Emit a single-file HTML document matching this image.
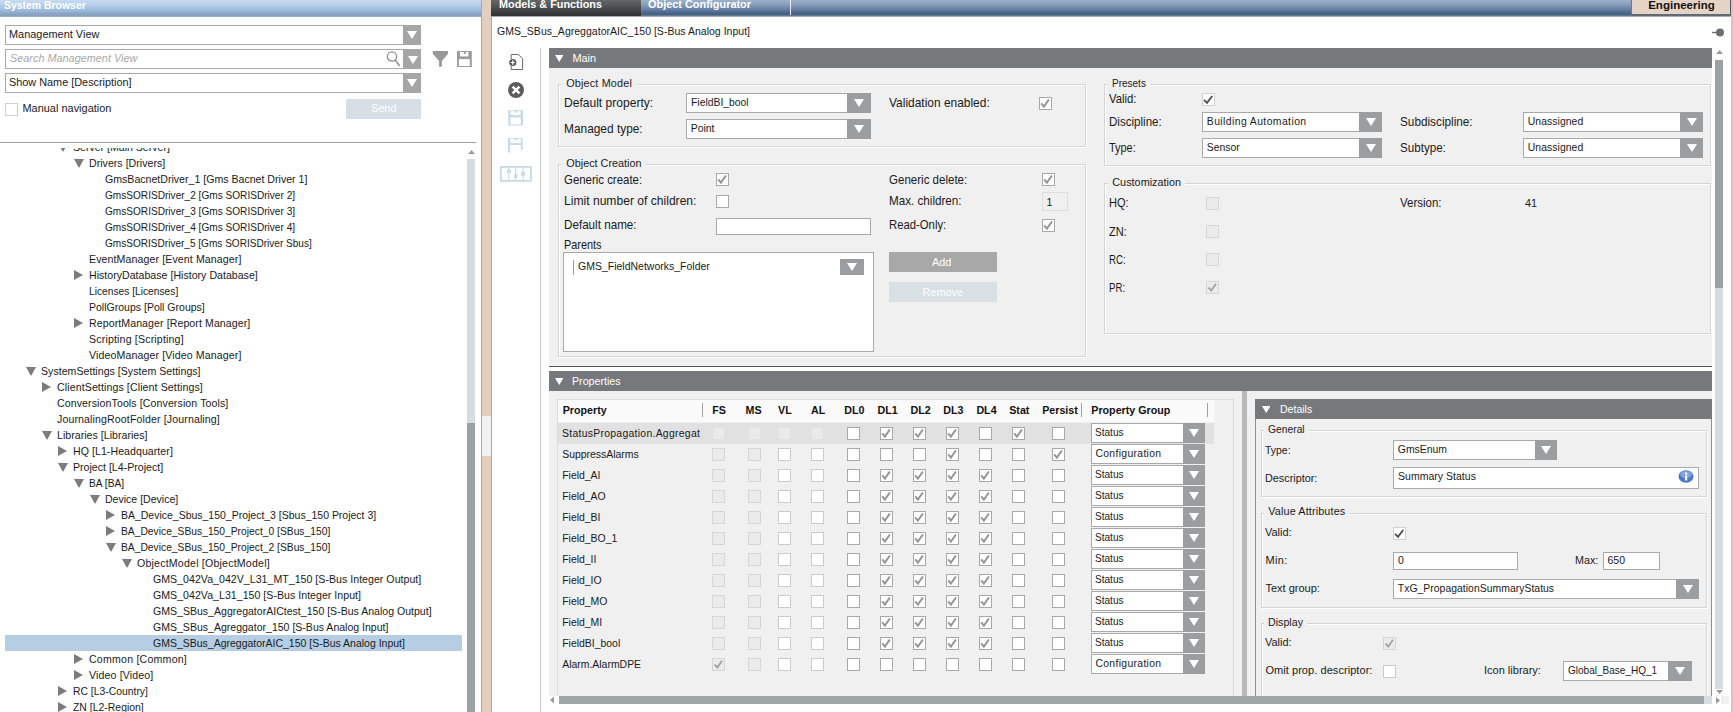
<!DOCTYPE html><html><head><meta charset="utf-8"><style>
html,body{margin:0;padding:0;}
body{width:1733px;height:712px;position:relative;overflow:hidden;background:#fff;font-family:"Liberation Sans", sans-serif;}
div,svg{position:absolute;}
.t{white-space:nowrap;}
</style></head><body>
<div style="left:0px;top:0px;width:482px;height:17px;background:linear-gradient(#c9dbf1 0px,#b2cde9 6px,#9ebcde 10px,#88a5c6 14px,#8a9db3 16px,#b8c0c8 17px);"></div>
<div class="t" style="left:4.2px;top:-1.80px;font-size:10.8px;line-height:14px;color:#fff;transform:scaleX(0.9661);transform-origin:0 0;font-weight:bold;">System Browser</div>
<div style="left:5px;top:25px;width:416px;height:20px;background:#fff;border:1px solid #a9a9a9;box-sizing:border-box;"></div>
<div style="left:403px;top:25px;width:18px;height:20px;background:#a6a6a6;"></div>
<svg style="left:407.0px;top:31.0px" width="10" height="8" viewBox="0 0 10 8"><path d="M0 0H10L5.0 8Z" fill="#fff"/></svg>
<div class="t" style="left:9px;top:26.00px;font-size:10.9px;line-height:16px;color:#1a1a1a;letter-spacing:0.025px;">Management View</div>
<div style="left:5px;top:49px;width:416px;height:20px;background:#fff;border:1px solid #a9a9a9;box-sizing:border-box;"></div>
<div style="left:403px;top:49px;width:18px;height:20px;background:#a6a6a6;"></div>
<svg style="left:407.5px;top:55.5px" width="10" height="8" viewBox="0 0 10 8"><path d="M0 0H10L5.0 8Z" fill="#fff"/></svg>
<div class="t" style="left:10px;top:50.00px;font-size:10.9px;line-height:16px;color:#a8a8a8;transform:scaleX(0.9981);transform-origin:0 0;font-style:italic;">Search Management View</div>
<svg style="left:385px;top:50px" width="18" height="18"><circle cx="7" cy="6.5" r="4.6" fill="none" stroke="#8e8e8e" stroke-width="1.3"/><path d="M10.2 10L14.6 16" stroke="#8e8e8e" stroke-width="1.5"/></svg>
<div style="left:5px;top:73px;width:416px;height:20px;background:#fff;border:1px solid #a9a9a9;box-sizing:border-box;"></div>
<div style="left:403px;top:73px;width:18px;height:20px;background:#a6a6a6;"></div>
<svg style="left:407.0px;top:79.0px" width="10" height="8" viewBox="0 0 10 8"><path d="M0 0H10L5.0 8Z" fill="#fff"/></svg>
<div class="t" style="left:9px;top:74.00px;font-size:10.9px;line-height:16px;color:#1a1a1a;transform:scaleX(0.9980);transform-origin:0 0;">Show Name [Description]</div>
<svg style="left:432px;top:51px" width="17" height="17"><path d="M0.8 0H16V2.7L9.9 10V15.7H7.1V10L0.8 2.7Z" fill="#999"/></svg>
<svg style="left:457px;top:51px" width="16" height="17"><rect x="0" y="0" width="14.8" height="16" fill="#9c9c9c"/><rect x="3" y="1" width="8.4" height="4.4" fill="#fff"/><rect x="7" y="1" width="1.9" height="1.9" fill="#9c9c9c"/><rect x="1.9" y="8.1" width="10.9" height="6.9" fill="#fff"/></svg>
<div style="left:5px;top:103px;width:13px;height:13px;background:#fff;border:1px solid #d0d0d0;box-sizing:border-box;"></div>
<div class="t" style="left:22.5px;top:99.50px;font-size:10.9px;line-height:16px;color:#1a1a1a;letter-spacing:0.031px;">Manual navigation</div>
<div style="left:346px;top:99px;width:75px;height:20px;background:#d6dfe3;"></div>
<div class="t" style="left:371px;top:100.00px;font-size:10.9px;line-height:16px;color:#fff;">Send</div>
<div style="left:0px;top:142px;width:476px;height:1px;background:#a0a0a0;"></div>
<div style="left:0;top:148px;width:466px;height:564px;overflow:hidden;">
<svg style="left:57.5px;top:-5.2px" width="10" height="9" viewBox="0 0 10 9"><path d="M0 0H10L5.0 9Z" fill="#7b7b7b"/></svg>
<div class="t" style="left:73px;top:-9.00px;font-size:10.6px;line-height:16px;color:#1a1a1a;transform:scaleX(0.9969);transform-origin:0 0;">Server [Main Server]</div>
<svg style="left:73.5px;top:10.8px" width="10" height="9" viewBox="0 0 10 9"><path d="M0 0H10L5.0 9Z" fill="#7b7b7b"/></svg>
<div class="t" style="left:89px;top:7.00px;font-size:10.6px;line-height:16px;color:#1a1a1a;letter-spacing:0.019px;">Drivers [Drivers]</div>
<div class="t" style="left:105px;top:23.00px;font-size:10.6px;line-height:16px;color:#1a1a1a;transform:scaleX(0.9992);transform-origin:0 0;">GmsBacnetDriver_1 [Gms Bacnet Driver 1]</div>
<div class="t" style="left:105px;top:39.00px;font-size:10.6px;line-height:16px;color:#1a1a1a;transform:scaleX(0.9524);transform-origin:0 0;">GmsSORISDriver_2 [Gms SORISDriver 2]</div>
<div class="t" style="left:105px;top:55.00px;font-size:10.6px;line-height:16px;color:#1a1a1a;transform:scaleX(0.9524);transform-origin:0 0;">GmsSORISDriver_3 [Gms SORISDriver 3]</div>
<div class="t" style="left:105px;top:71.00px;font-size:10.6px;line-height:16px;color:#1a1a1a;transform:scaleX(0.9524);transform-origin:0 0;">GmsSORISDriver_4 [Gms SORISDriver 4]</div>
<div class="t" style="left:105px;top:87.00px;font-size:10.6px;line-height:16px;color:#1a1a1a;transform:scaleX(0.9494);transform-origin:0 0;">GmsSORISDriver_5 [Gms SORISDriver Sbus]</div>
<div class="t" style="left:89px;top:103.00px;font-size:10.6px;line-height:16px;color:#1a1a1a;letter-spacing:0.105px;">EventManager [Event Manager]</div>
<svg style="left:74px;top:122px" width="9" height="10" viewBox="0 0 9 10"><path d="M0 0L9 5.0L0 10Z" fill="#7b7b7b"/></svg>
<div class="t" style="left:89px;top:119.00px;font-size:10.6px;line-height:16px;color:#1a1a1a;letter-spacing:0.011px;">HistoryDatabase [History Database]</div>
<div class="t" style="left:89px;top:135.00px;font-size:10.6px;line-height:16px;color:#1a1a1a;transform:scaleX(0.9650);transform-origin:0 0;">Licenses [Licenses]</div>
<div class="t" style="left:89px;top:151.00px;font-size:10.6px;line-height:16px;color:#1a1a1a;transform:scaleX(0.9931);transform-origin:0 0;">PollGroups [Poll Groups]</div>
<svg style="left:74px;top:170px" width="9" height="10" viewBox="0 0 9 10"><path d="M0 0L9 5.0L0 10Z" fill="#7b7b7b"/></svg>
<div class="t" style="left:89px;top:167.00px;font-size:10.6px;line-height:16px;color:#1a1a1a;letter-spacing:0.079px;">ReportManager [Report Manager]</div>
<div class="t" style="left:89px;top:183.00px;font-size:10.6px;line-height:16px;color:#1a1a1a;letter-spacing:0.167px;">Scripting [Scripting]</div>
<div class="t" style="left:89px;top:199.00px;font-size:10.6px;line-height:16px;color:#1a1a1a;letter-spacing:0.120px;">VideoManager [Video Manager]</div>
<svg style="left:25.5px;top:218.8px" width="10" height="9" viewBox="0 0 10 9"><path d="M0 0H10L5.0 9Z" fill="#7b7b7b"/></svg>
<div class="t" style="left:41px;top:215.00px;font-size:10.6px;line-height:16px;color:#1a1a1a;letter-spacing:0.019px;">SystemSettings [System Settings]</div>
<svg style="left:42px;top:234px" width="9" height="10" viewBox="0 0 9 10"><path d="M0 0L9 5.0L0 10Z" fill="#7b7b7b"/></svg>
<div class="t" style="left:57px;top:231.00px;font-size:10.6px;line-height:16px;color:#1a1a1a;letter-spacing:0.104px;">ClientSettings [Client Settings]</div>
<div class="t" style="left:57px;top:247.00px;font-size:10.6px;line-height:16px;color:#1a1a1a;letter-spacing:0.093px;">ConversionTools [Conversion Tools]</div>
<div class="t" style="left:57px;top:263.00px;font-size:10.6px;line-height:16px;color:#1a1a1a;letter-spacing:0.119px;">JournalingRootFolder [Journaling]</div>
<svg style="left:41.5px;top:282.8px" width="10" height="9" viewBox="0 0 10 9"><path d="M0 0H10L5.0 9Z" fill="#7b7b7b"/></svg>
<div class="t" style="left:57px;top:279.00px;font-size:10.6px;line-height:16px;color:#1a1a1a;letter-spacing:0.020px;">Libraries [Libraries]</div>
<svg style="left:58px;top:298px" width="9" height="10" viewBox="0 0 9 10"><path d="M0 0L9 5.0L0 10Z" fill="#7b7b7b"/></svg>
<div class="t" style="left:73px;top:295.00px;font-size:10.6px;line-height:16px;color:#1a1a1a;letter-spacing:0.050px;">HQ [L1-Headquarter]</div>
<svg style="left:57.5px;top:314.8px" width="10" height="9" viewBox="0 0 10 9"><path d="M0 0H10L5.0 9Z" fill="#7b7b7b"/></svg>
<div class="t" style="left:73px;top:311.00px;font-size:10.6px;line-height:16px;color:#1a1a1a;letter-spacing:0.000px;">Project [L4-Project]</div>
<svg style="left:73.5px;top:330.8px" width="10" height="9" viewBox="0 0 10 9"><path d="M0 0H10L5.0 9Z" fill="#7b7b7b"/></svg>
<div class="t" style="left:89px;top:327.00px;font-size:10.6px;line-height:16px;color:#1a1a1a;transform:scaleX(0.9598);transform-origin:0 0;">BA [BA]</div>
<svg style="left:89.5px;top:346.8px" width="10" height="9" viewBox="0 0 10 9"><path d="M0 0H10L5.0 9Z" fill="#7b7b7b"/></svg>
<div class="t" style="left:105px;top:343.00px;font-size:10.6px;line-height:16px;color:#1a1a1a;transform:scaleX(0.9950);transform-origin:0 0;">Device [Device]</div>
<svg style="left:106px;top:362px" width="9" height="10" viewBox="0 0 9 10"><path d="M0 0L9 5.0L0 10Z" fill="#7b7b7b"/></svg>
<div class="t" style="left:121px;top:359.00px;font-size:10.6px;line-height:16px;color:#1a1a1a;transform:scaleX(0.9891);transform-origin:0 0;">BA_Device_Sbus_150_Project_3 [Sbus_150 Project 3]</div>
<svg style="left:106px;top:378px" width="9" height="10" viewBox="0 0 9 10"><path d="M0 0L9 5.0L0 10Z" fill="#7b7b7b"/></svg>
<div class="t" style="left:121px;top:375.00px;font-size:10.6px;line-height:16px;color:#1a1a1a;transform:scaleX(0.9707);transform-origin:0 0;">BA_Device_SBus_150_Project_0 [SBus_150]</div>
<svg style="left:105.5px;top:394.8px" width="10" height="9" viewBox="0 0 10 9"><path d="M0 0H10L5.0 9Z" fill="#7b7b7b"/></svg>
<div class="t" style="left:121px;top:391.00px;font-size:10.6px;line-height:16px;color:#1a1a1a;transform:scaleX(0.9707);transform-origin:0 0;">BA_Device_SBus_150_Project_2 [SBus_150]</div>
<svg style="left:121.5px;top:410.8px" width="10" height="9" viewBox="0 0 10 9"><path d="M0 0H10L5.0 9Z" fill="#7b7b7b"/></svg>
<div class="t" style="left:137px;top:407.00px;font-size:10.6px;line-height:16px;color:#1a1a1a;letter-spacing:0.203px;">ObjectModel [ObjectModel]</div>
<div class="t" style="left:153px;top:423.00px;font-size:10.6px;line-height:16px;color:#1a1a1a;letter-spacing:0.023px;">GMS_042Va_042V_L31_MT_150 [S-Bus Integer Output]</div>
<div class="t" style="left:153px;top:439.00px;font-size:10.6px;line-height:16px;color:#1a1a1a;letter-spacing:0.023px;">GMS_042Va_L31_150 [S-Bus Integer Input]</div>
<div class="t" style="left:153px;top:455.00px;font-size:10.6px;line-height:16px;color:#1a1a1a;transform:scaleX(0.9959);transform-origin:0 0;">GMS_SBus_AggregatorAICtest_150 [S-Bus Analog Output]</div>
<div class="t" style="left:153px;top:471.00px;font-size:10.6px;line-height:16px;color:#1a1a1a;transform:scaleX(0.9945);transform-origin:0 0;">GMS_SBus_Agreggator_150 [S-Bus Analog Input]</div>
<div style="left:5px;top:487px;width:457px;height:16px;background:#b5cee3;"></div>
<div class="t" style="left:153px;top:487.00px;font-size:10.6px;line-height:16px;color:#1a1a1a;transform:scaleX(0.9902);transform-origin:0 0;">GMS_SBus_AgreggatorAIC_150 [S-Bus Analog Input]</div>
<svg style="left:74px;top:506px" width="9" height="10" viewBox="0 0 9 10"><path d="M0 0L9 5.0L0 10Z" fill="#7b7b7b"/></svg>
<div class="t" style="left:89px;top:503.00px;font-size:10.6px;line-height:16px;color:#1a1a1a;letter-spacing:0.216px;">Common [Common]</div>
<svg style="left:74px;top:522px" width="9" height="10" viewBox="0 0 9 10"><path d="M0 0L9 5.0L0 10Z" fill="#7b7b7b"/></svg>
<div class="t" style="left:89px;top:519.00px;font-size:10.6px;line-height:16px;color:#1a1a1a;letter-spacing:0.138px;">Video [Video]</div>
<svg style="left:58px;top:538px" width="9" height="10" viewBox="0 0 9 10"><path d="M0 0L9 5.0L0 10Z" fill="#7b7b7b"/></svg>
<div class="t" style="left:73px;top:535.00px;font-size:10.6px;line-height:16px;color:#1a1a1a;transform:scaleX(0.9787);transform-origin:0 0;">RC [L3-Country]</div>
<svg style="left:58px;top:554px" width="9" height="10" viewBox="0 0 9 10"><path d="M0 0L9 5.0L0 10Z" fill="#7b7b7b"/></svg>
<div class="t" style="left:73px;top:551.00px;font-size:10.6px;line-height:16px;color:#1a1a1a;transform:scaleX(0.9851);transform-origin:0 0;">ZN [L2-Region]</div>
</div>
<svg style="left:467.5px;top:149.5px" width="7" height="4" viewBox="0 0 7 4"><path d="M0 4H7L3.5 0Z" fill="#9a9a9a"/></svg>
<div style="left:467px;top:159px;width:8px;height:553px;background:#d5dde0;"></div>
<div style="left:467px;top:423px;width:8px;height:289px;background:#9ca1a4;"></div>
<div style="left:481px;top:0px;width:11px;height:712px;background:#e3cfc0;border-left:1px solid #a9a9a9;border-right:1px solid #a9a9a9;box-sizing:border-box;"></div>
<div style="left:482px;top:416px;width:9px;height:40px;background:#f2f2f2;"></div>
<div style="left:492px;top:0px;width:1241px;height:17px;background:linear-gradient(#9db1c9 0px,#8ba2bd 4px,#6883a6 9px,#47658b 13px,#455f82 15px,#8793a0 16px,#c0c6cc 17px);"></div>
<div style="left:491px;top:0px;width:150px;height:16px;background:linear-gradient(#646868,#4a4e4e 50%,#353939 85%,#303434);"></div>
<div class="t" style="left:498.5px;top:-3.40px;font-size:11.3px;line-height:14px;color:#fff;transform:scaleX(0.9595);transform-origin:0 0;font-weight:bold;">Models &amp; Functions</div>
<div class="t" style="left:648px;top:-3.40px;font-size:11.3px;line-height:14px;color:#fff;transform:scaleX(0.9656);transform-origin:0 0;font-weight:bold;">Object Configurator</div>
<div style="left:790px;top:0px;width:1px;height:15px;background:#e8eef4;"></div>
<div style="left:1631px;top:0px;width:101px;height:16px;background:#e5d4c6;border-left:1px solid #6f7a85;border-bottom:2px solid #5f6a75;border-right:2px solid #505a66;box-sizing:border-box;"></div>
<div style="left:1731px;top:0px;width:2px;height:712px;background:#cdc6c2;"></div>
<div class="t" style="left:1648.2px;top:-2.40px;font-size:11.5px;line-height:14px;color:#111;letter-spacing:0.013px;font-weight:bold;">Engineering</div>
<div class="t" style="left:497px;top:23.00px;font-size:10.5px;line-height:16px;color:#1a1a1a;letter-spacing:0.019px;">GMS_SBus_AgreggatorAIC_150 [S-Bus Analog Input]</div>
<svg style="left:1711px;top:27px" width="14" height="11"><path d="M1 5.5H6" stroke="#6d6d6d" stroke-width="1.4"/><circle cx="9" cy="5.5" r="4" fill="#6d6d6d"/></svg>
<div style="left:540px;top:48px;width:1px;height:664px;background:#cfcfcf;"></div>
<svg style="left:505px;top:50px" width="22" height="22"><path d="M6.2 9V4.5H13.4L17.6 8.7V19.5H6.2V16" fill="none" stroke="#6a6a6a" stroke-width="1"/><circle cx="7.8" cy="12.5" r="3.6" fill="#5a5a5a"/><path d="M5.6 12.5H10M7.8 10.3V14.7" stroke="#fff" stroke-width="1.2"/></svg>
<svg style="left:507px;top:81px" width="18" height="18"><circle cx="9" cy="9" r="8" fill="#5e5e5e"/><path d="M5.6 5.6L12.4 12.4M12.4 5.6L5.6 12.4" stroke="#fff" stroke-width="2.3"/></svg>
<svg style="left:508px;top:110px" width="16" height="16"><rect x="0.2" y="0.2" width="14.8" height="15.3" fill="#c6dce2"/><rect x="2.6" y="1.1" width="9.9" height="4" fill="#fff"/><rect x="7" y="1" width="2.5" height="1.7" fill="#c6dce2"/><rect x="2.6" y="7.4" width="10.2" height="7" fill="#fff"/></svg>
<svg style="left:508px;top:138px" width="17" height="16"><rect x="0" y="0" width="14.6" height="14.6" fill="#c6dce2"/><rect x="2.2" y="0.8" width="10.6" height="4.3" fill="#fff"/><rect x="6.5" y="0.7" width="2.6" height="1.7" fill="#c6dce2"/><rect x="2.2" y="7" width="10.6" height="8" fill="#fff"/><rect x="12.8" y="11.7" width="2" height="3" fill="#fff"/><rect x="4" y="13.5" width="4" height="1.2" fill="#fff"/><rect x="12.5" y="13.5" width="2" height="1.2" fill="#fff"/></svg>
<svg style="left:500px;top:166px" width="32" height="16"><rect x="0.9" y="0.9" width="30" height="14" fill="none" stroke="#c6dce2" stroke-width="1.8"/><path d="M8.8 2V14M15.6 2V14M23.2 2V14" stroke="#c6dce2" stroke-width="1.1"/><rect x="7" y="3.8" width="4" height="3" fill="#c6dce2"/><rect x="14" y="8" width="3.5" height="3.8" fill="#c6dce2"/><rect x="21" y="6" width="4" height="3.6" fill="#c6dce2"/></svg>
<div style="left:549px;top:48px;width:1163px;height:19.5px;background:#76797c;"></div>
<svg style="left:554.5px;top:54.5px" width="8.5" height="7" viewBox="0 0 8.5 7"><path d="M0 0H8.5L4.25 7Z" fill="#fff"/></svg>
<div class="t" style="left:572.4px;top:49.60px;font-size:10.9px;line-height:16px;color:#fff;letter-spacing:0.016px;">Main</div>
<div style="left:549px;top:67.5px;width:1163px;height:298.5px;background:#f0f0f0;"></div>
<div style="left:549px;top:366px;width:1163px;height:1px;background:#58595b;"></div>
<div style="left:558px;top:84px;width:528px;height:63px;border:1px solid #d5d5d5;box-shadow:inset 1px 1px 0 #fff, 1px 1px 0 #fff;box-sizing:border-box;"></div>
<div style="left:562.3px;top:82px;width:73.5px;height:4px;background:#f0f0f0;"></div>
<div class="t" style="left:566.3px;top:74.70px;font-size:10.8px;line-height:16px;color:#1a1a1a;letter-spacing:0.172px;">Object Model</div>
<div style="left:558px;top:164px;width:528px;height:193px;border:1px solid #d5d5d5;box-shadow:inset 1px 1px 0 #fff, 1px 1px 0 #fff;box-sizing:border-box;"></div>
<div style="left:562.3px;top:162px;width:83.2px;height:4px;background:#f0f0f0;"></div>
<div class="t" style="left:566.3px;top:155.20px;font-size:10.8px;line-height:16px;color:#1a1a1a;letter-spacing:0.010px;">Object Creation</div>
<div style="left:1104px;top:84px;width:607px;height:81.5px;border:1px solid #d5d5d5;box-shadow:inset 1px 1px 0 #fff, 1px 1px 0 #fff;box-sizing:border-box;"></div>
<div style="left:1108.3px;top:82px;width:41.9px;height:4px;background:#f0f0f0;"></div>
<div class="t" style="left:1112.3px;top:74.70px;font-size:10.8px;line-height:16px;color:#1a1a1a;transform:scaleX(0.9259);transform-origin:0 0;">Presets</div>
<div style="left:1104px;top:183px;width:607px;height:150.5px;border:1px solid #d5d5d5;box-shadow:inset 1px 1px 0 #fff, 1px 1px 0 #fff;box-sizing:border-box;"></div>
<div style="left:1108.3px;top:181px;width:76.8px;height:4px;background:#f0f0f0;"></div>
<div class="t" style="left:1112.3px;top:173.70px;font-size:10.8px;line-height:16px;color:#1a1a1a;letter-spacing:0.027px;">Customization</div>
<div class="t" style="left:563.5px;top:94.60px;font-size:12.2px;line-height:16px;color:#1a1a1a;transform:scaleX(0.9894);transform-origin:0 0;">Default property:</div>
<div style="left:686px;top:93px;width:185px;height:20px;background:#fff;border:1px solid #a9a9a9;box-sizing:border-box;"></div>
<div style="left:847px;top:93px;width:24px;height:20px;background:#9b9ea0;"></div>
<svg style="left:854.0px;top:99.0px" width="10" height="8" viewBox="0 0 10 8"><path d="M0 0H10L5.0 8Z" fill="#fff"/></svg>
<div class="t" style="left:690.8px;top:95.00px;font-size:10.4px;line-height:16px;color:#1a1a1a;transform:scaleX(0.9979);transform-origin:0 0;">FieldBI_bool</div>
<div class="t" style="left:563.5px;top:120.60px;font-size:12.2px;line-height:16px;color:#1a1a1a;transform:scaleX(0.9757);transform-origin:0 0;">Managed type:</div>
<div style="left:686px;top:119px;width:185px;height:20px;background:#fff;border:1px solid #a9a9a9;box-sizing:border-box;"></div>
<div style="left:847px;top:119px;width:24px;height:20px;background:#9b9ea0;"></div>
<svg style="left:854.0px;top:125.0px" width="10" height="8" viewBox="0 0 10 8"><path d="M0 0H10L5.0 8Z" fill="#fff"/></svg>
<div class="t" style="left:690.8px;top:121.00px;font-size:10.4px;line-height:16px;color:#1a1a1a;">Point</div>
<div class="t" style="left:889px;top:94.60px;font-size:12.2px;line-height:16px;color:#1a1a1a;transform:scaleX(0.9801);transform-origin:0 0;">Validation enabled:</div>
<div style="left:1039px;top:97px;width:13px;height:13px;background:#fff;border:1px solid #a8a8a8;box-sizing:border-box;"></div>
<svg style="left:1039px;top:97px" width="13" height="13"><path d="M2.2 6.3L4.9 9.6L9.9 2.5" fill="none" stroke="#959595" stroke-width="2"/></svg>
<div class="t" style="left:563.5px;top:172.00px;font-size:12.2px;line-height:16px;color:#1a1a1a;transform:scaleX(0.9371);transform-origin:0 0;">Generic create:</div>
<div style="left:716px;top:173px;width:13px;height:13px;background:#fff;border:1px solid #a8a8a8;box-sizing:border-box;"></div>
<svg style="left:716px;top:173px" width="13" height="13"><path d="M2.2 6.3L4.9 9.6L9.9 2.5" fill="none" stroke="#959595" stroke-width="2"/></svg>
<div class="t" style="left:563.5px;top:193.00px;font-size:12.2px;line-height:16px;color:#1a1a1a;transform:scaleX(0.9926);transform-origin:0 0;">Limit number of children:</div>
<div style="left:716px;top:195px;width:13px;height:13px;background:#fff;border:1px solid #a8a8a8;box-sizing:border-box;"></div>
<div class="t" style="left:563.5px;top:217.00px;font-size:12.2px;line-height:16px;color:#1a1a1a;transform:scaleX(0.9565);transform-origin:0 0;">Default name:</div>
<div style="left:716px;top:217.5px;width:155px;height:17px;background:#fff;border:1px solid #a9a9a9;box-sizing:border-box;"></div>
<div class="t" style="left:563.5px;top:236.50px;font-size:12.2px;line-height:16px;color:#1a1a1a;transform:scaleX(0.8933);transform-origin:0 0;">Parents</div>
<div style="left:563px;top:252px;width:311px;height:100px;background:#fff;border:1px solid #a9a9a9;box-sizing:border-box;"></div>
<div style="left:572.5px;top:260px;width:1px;height:15px;background:#9a9a9a;"></div>
<div class="t" style="left:578px;top:258.00px;font-size:10.5px;line-height:16px;color:#1a1a1a;transform:scaleX(0.9994);transform-origin:0 0;">GMS_FieldNetworks_Folder</div>
<div style="left:840px;top:259px;width:23.5px;height:15.5px;background:#9b9ea0;"></div>
<svg style="left:847px;top:263px" width="10" height="8" viewBox="0 0 10 8"><path d="M0 0H10L5.0 8Z" fill="#fff"/></svg>
<div class="t" style="left:889px;top:172.00px;font-size:12.2px;line-height:16px;color:#1a1a1a;transform:scaleX(0.9466);transform-origin:0 0;">Generic delete:</div>
<div style="left:1042px;top:173px;width:13px;height:13px;background:#fff;border:1px solid #a8a8a8;box-sizing:border-box;"></div>
<svg style="left:1042px;top:173px" width="13" height="13"><path d="M2.2 6.3L4.9 9.6L9.9 2.5" fill="none" stroke="#959595" stroke-width="2"/></svg>
<div class="t" style="left:889px;top:193.00px;font-size:12.2px;line-height:16px;color:#1a1a1a;transform:scaleX(0.9567);transform-origin:0 0;">Max. children:</div>
<div style="left:1042px;top:192px;width:26px;height:19px;background:#f0f0f0;border:1px solid #dedede;box-sizing:border-box;"></div>
<div class="t" style="left:1046.5px;top:193.50px;font-size:10.5px;line-height:16px;color:#1a1a1a;">1</div>
<div class="t" style="left:889px;top:217.00px;font-size:12.2px;line-height:16px;color:#1a1a1a;transform:scaleX(0.9282);transform-origin:0 0;">Read-Only:</div>
<div style="left:1042px;top:219px;width:13px;height:13px;background:#fff;border:1px solid #a8a8a8;box-sizing:border-box;"></div>
<svg style="left:1042px;top:219px" width="13" height="13"><path d="M2.2 6.3L4.9 9.6L9.9 2.5" fill="none" stroke="#959595" stroke-width="2"/></svg>
<div style="left:889px;top:252px;width:108px;height:20px;background:#a8a8a8;"></div>
<div class="t" style="left:932px;top:254.00px;font-size:10.9px;line-height:16px;color:#fff;">Add</div>
<div style="left:889px;top:282px;width:108px;height:20px;background:#d8e0e3;"></div>
<div class="t" style="left:922.5px;top:284.00px;font-size:10.9px;line-height:16px;color:#fff;">Remove</div>
<div class="t" style="left:1109.3px;top:91.00px;font-size:12.2px;line-height:16px;color:#1a1a1a;transform:scaleX(0.9276);transform-origin:0 0;">Valid:</div>
<div style="left:1202px;top:93px;width:13px;height:13px;background:#fff;border:1px solid #d2d2d2;box-sizing:border-box;"></div>
<svg style="left:1202px;top:93px" width="13" height="13"><path d="M2 6.8L5 9.8L10.2 3" fill="none" stroke="#505050" stroke-width="1.9"/></svg>
<div class="t" style="left:1109.3px;top:114.00px;font-size:12.2px;line-height:16px;color:#1a1a1a;transform:scaleX(0.9491);transform-origin:0 0;">Discipline:</div>
<div style="left:1202px;top:112px;width:180px;height:20px;background:#fff;border:1px solid #a9a9a9;box-sizing:border-box;"></div>
<div style="left:1359px;top:112px;width:23px;height:20px;background:#9b9ea0;"></div>
<svg style="left:1365.5px;top:118.0px" width="10" height="8" viewBox="0 0 10 8"><path d="M0 0H10L5.0 8Z" fill="#fff"/></svg>
<div class="t" style="left:1206.8px;top:114.00px;font-size:10.4px;line-height:16px;color:#1a1a1a;letter-spacing:0.415px;">Building Automation</div>
<div class="t" style="left:1109.3px;top:140.00px;font-size:12.2px;line-height:16px;color:#1a1a1a;transform:scaleX(0.8966);transform-origin:0 0;">Type:</div>
<div style="left:1202px;top:138px;width:180px;height:20px;background:#fff;border:1px solid #a9a9a9;box-sizing:border-box;"></div>
<div style="left:1359px;top:138px;width:23px;height:20px;background:#9b9ea0;"></div>
<svg style="left:1365.5px;top:144.0px" width="10" height="8" viewBox="0 0 10 8"><path d="M0 0H10L5.0 8Z" fill="#fff"/></svg>
<div class="t" style="left:1206.8px;top:140.00px;font-size:10.4px;line-height:16px;color:#1a1a1a;">Sensor</div>
<div class="t" style="left:1400px;top:114.00px;font-size:12.2px;line-height:16px;color:#1a1a1a;transform:scaleX(0.9658);transform-origin:0 0;">Subdiscipline:</div>
<div style="left:1523px;top:112px;width:180px;height:20px;background:#fff;border:1px solid #a9a9a9;box-sizing:border-box;"></div>
<div style="left:1680px;top:112px;width:23px;height:20px;background:#9b9ea0;"></div>
<svg style="left:1686.5px;top:118.0px" width="10" height="8" viewBox="0 0 10 8"><path d="M0 0H10L5.0 8Z" fill="#fff"/></svg>
<div class="t" style="left:1527.8px;top:114.00px;font-size:10.4px;line-height:16px;color:#1a1a1a;letter-spacing:0.054px;">Unassigned</div>
<div class="t" style="left:1400px;top:140.00px;font-size:12.2px;line-height:16px;color:#1a1a1a;transform:scaleX(0.9525);transform-origin:0 0;">Subtype:</div>
<div style="left:1523px;top:138px;width:180px;height:20px;background:#fff;border:1px solid #a9a9a9;box-sizing:border-box;"></div>
<div style="left:1680px;top:138px;width:23px;height:20px;background:#9b9ea0;"></div>
<svg style="left:1686.5px;top:144.0px" width="10" height="8" viewBox="0 0 10 8"><path d="M0 0H10L5.0 8Z" fill="#fff"/></svg>
<div class="t" style="left:1527.8px;top:140.00px;font-size:10.4px;line-height:16px;color:#1a1a1a;letter-spacing:0.054px;">Unassigned</div>
<div class="t" style="left:1109.3px;top:195.00px;font-size:12.2px;line-height:16px;color:#1a1a1a;transform:scaleX(0.9072);transform-origin:0 0;">HQ:</div>
<div style="left:1206px;top:197px;width:13px;height:13px;background:#ebebeb;border:1px solid #d6d6d6;box-sizing:border-box;"></div>
<div class="t" style="left:1109.3px;top:223.80px;font-size:12.2px;line-height:16px;color:#1a1a1a;transform:scaleX(0.9113);transform-origin:0 0;">ZN:</div>
<div style="left:1206px;top:225px;width:13px;height:13px;background:#ebebeb;border:1px solid #d6d6d6;box-sizing:border-box;"></div>
<div class="t" style="left:1109.3px;top:251.80px;font-size:12.2px;line-height:16px;color:#1a1a1a;transform:scaleX(0.7911);transform-origin:0 0;">RC:</div>
<div style="left:1206px;top:253px;width:13px;height:13px;background:#ebebeb;border:1px solid #d6d6d6;box-sizing:border-box;"></div>
<div class="t" style="left:1109.3px;top:279.80px;font-size:12.2px;line-height:16px;color:#1a1a1a;transform:scaleX(0.7902);transform-origin:0 0;">PR:</div>
<div style="left:1206px;top:281px;width:13px;height:13px;background:#ebebeb;border:1px solid #d6d6d6;box-sizing:border-box;"></div>
<svg style="left:1206px;top:281px" width="13" height="13"><path d="M2.6 6.6L5.3 9.6L10 2.8" fill="none" stroke="#a2a2a2" stroke-width="1.8"/></svg>
<div class="t" style="left:1400px;top:195.00px;font-size:12.2px;line-height:16px;color:#1a1a1a;transform:scaleX(0.9423);transform-origin:0 0;">Version:</div>
<div class="t" style="left:1525px;top:194.50px;font-size:10.9px;line-height:16px;color:#1a1a1a;">41</div>
<div style="left:549px;top:371px;width:1163px;height:20px;background:#76797c;"></div>
<svg style="left:554.5px;top:378px" width="8.5" height="7" viewBox="0 0 8.5 7"><path d="M0 0H8.5L4.25 7Z" fill="#fff"/></svg>
<div class="t" style="left:572.4px;top:373.00px;font-size:10.9px;line-height:16px;color:#fff;transform:scaleX(0.9798);transform-origin:0 0;">Properties</div>
<div style="left:549px;top:391px;width:1163px;height:305px;background:#f0f0f0;"></div>
<div style="left:557px;top:399px;width:677px;height:297px;border:1px solid #dcdcdc;border-bottom:none;box-sizing:border-box;"></div>
<div style="left:558px;top:400px;width:657px;height:22px;background:#fafafa;"></div>
<div class="t" style="left:562.7px;top:402.30px;font-size:10.7px;line-height:16px;color:#111;font-weight:bold;">Property</div>
<div style="left:702px;top:403px;width:1px;height:14px;background:#a0a0a0;"></div>
<div class="t" style="left:712.3px;top:402.30px;font-size:10.7px;line-height:16px;color:#111;font-weight:bold;">FS</div>
<div class="t" style="left:745.5px;top:402.30px;font-size:10.7px;line-height:16px;color:#111;font-weight:bold;">MS</div>
<div class="t" style="left:778px;top:402.30px;font-size:10.7px;line-height:16px;color:#111;font-weight:bold;">VL</div>
<div class="t" style="left:811px;top:402.30px;font-size:10.7px;line-height:16px;color:#111;font-weight:bold;">AL</div>
<div class="t" style="left:844.3px;top:402.30px;font-size:10.7px;line-height:16px;color:#111;font-weight:bold;">DL0</div>
<div class="t" style="left:877.5px;top:402.30px;font-size:10.7px;line-height:16px;color:#111;font-weight:bold;">DL1</div>
<div class="t" style="left:910.5px;top:402.30px;font-size:10.7px;line-height:16px;color:#111;font-weight:bold;">DL2</div>
<div class="t" style="left:943.3px;top:402.30px;font-size:10.7px;line-height:16px;color:#111;font-weight:bold;">DL3</div>
<div class="t" style="left:976.4px;top:402.30px;font-size:10.7px;line-height:16px;color:#111;font-weight:bold;">DL4</div>
<div class="t" style="left:1009.2px;top:402.30px;font-size:10.7px;line-height:16px;color:#111;font-weight:bold;">Stat</div>
<div class="t" style="left:1042.2px;top:402.30px;font-size:10.7px;line-height:16px;color:#111;font-weight:bold;">Persist</div>
<div style="left:1081px;top:403px;width:1px;height:14px;background:#a0a0a0;"></div>
<div class="t" style="left:1091.3px;top:402.30px;font-size:10.7px;line-height:16px;color:#111;font-weight:bold;">Property Group</div>
<div style="left:1207px;top:403px;width:1px;height:14px;background:#a0a0a0;"></div>
<div style="left:558px;top:423px;width:656px;height:21px;background:#e1e1e1;"></div>
<div style="left:562px;top:426px;width:138px;height:16px;overflow:hidden;"><div class="t" style="left:0;top:0;font-size:10.45px;letter-spacing:0.27px;line-height:16px;color:#1a1a1a;">StatusPropagation.Aggregation</div></div>
<div style="left:713px;top:428px;width:11px;height:11px;background:#e9eaea;"></div>
<div style="left:749px;top:428px;width:11px;height:11px;background:#e9eaea;"></div>
<div style="left:779px;top:428px;width:11px;height:11px;background:#e9eaea;"></div>
<div style="left:812px;top:428px;width:11px;height:11px;background:#e9eaea;"></div>
<div style="left:847px;top:427px;width:13px;height:13px;background:#fff;border:1px solid #a8a8a8;box-sizing:border-box;"></div>
<div style="left:880px;top:427px;width:13px;height:13px;background:#fff;border:1px solid #a8a8a8;box-sizing:border-box;"></div>
<svg style="left:880px;top:427px" width="13" height="13"><path d="M2.2 6.3L4.9 9.6L9.9 2.5" fill="none" stroke="#959595" stroke-width="2"/></svg>
<div style="left:913px;top:427px;width:13px;height:13px;background:#fff;border:1px solid #a8a8a8;box-sizing:border-box;"></div>
<svg style="left:913px;top:427px" width="13" height="13"><path d="M2.2 6.3L4.9 9.6L9.9 2.5" fill="none" stroke="#959595" stroke-width="2"/></svg>
<div style="left:946px;top:427px;width:13px;height:13px;background:#fff;border:1px solid #a8a8a8;box-sizing:border-box;"></div>
<svg style="left:946px;top:427px" width="13" height="13"><path d="M2.2 6.3L4.9 9.6L9.9 2.5" fill="none" stroke="#959595" stroke-width="2"/></svg>
<div style="left:979px;top:427px;width:13px;height:13px;background:#fff;border:1px solid #a8a8a8;box-sizing:border-box;"></div>
<div style="left:1012px;top:427px;width:13px;height:13px;background:#fff;border:1px solid #a8a8a8;box-sizing:border-box;"></div>
<svg style="left:1012px;top:427px" width="13" height="13"><path d="M2.2 6.3L4.9 9.6L9.9 2.5" fill="none" stroke="#959595" stroke-width="2"/></svg>
<div style="left:1052px;top:427px;width:13px;height:13px;background:#fff;border:1px solid #a8a8a8;box-sizing:border-box;"></div>
<div style="left:1091px;top:423px;width:114px;height:20px;background:#fff;border:1px solid #a9a9a9;box-sizing:border-box;"></div>
<div style="left:1183px;top:423px;width:22px;height:20px;background:#9b9ea0;"></div>
<svg style="left:1189.0px;top:429.0px" width="10" height="8" viewBox="0 0 10 8"><path d="M0 0H10L5.0 8Z" fill="#fff"/></svg>
<div class="t" style="left:1095.4px;top:425.00px;font-size:10.4px;line-height:16px;color:#1a1a1a;transform:scaleX(0.9683);transform-origin:0 0;">Status</div>
<div class="t" style="left:562.2px;top:446.90px;font-size:10.45px;line-height:16px;color:#1a1a1a;">SuppressAlarms</div>
<div style="left:712px;top:448px;width:13px;height:13px;background:#ebebeb;border:1px solid #d6d6d6;box-sizing:border-box;"></div>
<div style="left:748px;top:448px;width:13px;height:13px;background:#ebebeb;border:1px solid #d6d6d6;box-sizing:border-box;"></div>
<div style="left:778px;top:448px;width:13px;height:13px;background:#fff;border:1px solid #cbcbcb;box-sizing:border-box;"></div>
<div style="left:811px;top:448px;width:13px;height:13px;background:#fff;border:1px solid #cbcbcb;box-sizing:border-box;"></div>
<div style="left:847px;top:448px;width:13px;height:13px;background:#fff;border:1px solid #a8a8a8;box-sizing:border-box;"></div>
<div style="left:880px;top:448px;width:13px;height:13px;background:#fff;border:1px solid #a8a8a8;box-sizing:border-box;"></div>
<div style="left:913px;top:448px;width:13px;height:13px;background:#fff;border:1px solid #a8a8a8;box-sizing:border-box;"></div>
<div style="left:946px;top:448px;width:13px;height:13px;background:#fff;border:1px solid #a8a8a8;box-sizing:border-box;"></div>
<svg style="left:946px;top:448px" width="13" height="13"><path d="M2.2 6.3L4.9 9.6L9.9 2.5" fill="none" stroke="#959595" stroke-width="2"/></svg>
<div style="left:979px;top:448px;width:13px;height:13px;background:#fff;border:1px solid #a8a8a8;box-sizing:border-box;"></div>
<div style="left:1012px;top:448px;width:13px;height:13px;background:#fff;border:1px solid #a8a8a8;box-sizing:border-box;"></div>
<div style="left:1052px;top:448px;width:13px;height:13px;background:#fff;border:1px solid #a8a8a8;box-sizing:border-box;"></div>
<svg style="left:1052px;top:448px" width="13" height="13"><path d="M2.2 6.3L4.9 9.6L9.9 2.5" fill="none" stroke="#959595" stroke-width="2"/></svg>
<div style="left:1091px;top:444px;width:114px;height:20px;background:#fff;border:1px solid #a9a9a9;box-sizing:border-box;"></div>
<div style="left:1183px;top:444px;width:22px;height:20px;background:#9b9ea0;"></div>
<svg style="left:1189.0px;top:450.0px" width="10" height="8" viewBox="0 0 10 8"><path d="M0 0H10L5.0 8Z" fill="#fff"/></svg>
<div class="t" style="left:1095.4px;top:446.00px;font-size:10.4px;line-height:16px;color:#1a1a1a;letter-spacing:0.327px;">Configuration</div>
<div class="t" style="left:562.2px;top:467.90px;font-size:10.45px;line-height:16px;color:#1a1a1a;">Field_AI</div>
<div style="left:712px;top:469px;width:13px;height:13px;background:#ebebeb;border:1px solid #d6d6d6;box-sizing:border-box;"></div>
<div style="left:748px;top:469px;width:13px;height:13px;background:#ebebeb;border:1px solid #d6d6d6;box-sizing:border-box;"></div>
<div style="left:778px;top:469px;width:13px;height:13px;background:#fff;border:1px solid #cbcbcb;box-sizing:border-box;"></div>
<div style="left:811px;top:469px;width:13px;height:13px;background:#fff;border:1px solid #cbcbcb;box-sizing:border-box;"></div>
<div style="left:847px;top:469px;width:13px;height:13px;background:#fff;border:1px solid #a8a8a8;box-sizing:border-box;"></div>
<div style="left:880px;top:469px;width:13px;height:13px;background:#fff;border:1px solid #a8a8a8;box-sizing:border-box;"></div>
<svg style="left:880px;top:469px" width="13" height="13"><path d="M2.2 6.3L4.9 9.6L9.9 2.5" fill="none" stroke="#959595" stroke-width="2"/></svg>
<div style="left:913px;top:469px;width:13px;height:13px;background:#fff;border:1px solid #a8a8a8;box-sizing:border-box;"></div>
<svg style="left:913px;top:469px" width="13" height="13"><path d="M2.2 6.3L4.9 9.6L9.9 2.5" fill="none" stroke="#959595" stroke-width="2"/></svg>
<div style="left:946px;top:469px;width:13px;height:13px;background:#fff;border:1px solid #a8a8a8;box-sizing:border-box;"></div>
<svg style="left:946px;top:469px" width="13" height="13"><path d="M2.2 6.3L4.9 9.6L9.9 2.5" fill="none" stroke="#959595" stroke-width="2"/></svg>
<div style="left:979px;top:469px;width:13px;height:13px;background:#fff;border:1px solid #a8a8a8;box-sizing:border-box;"></div>
<svg style="left:979px;top:469px" width="13" height="13"><path d="M2.2 6.3L4.9 9.6L9.9 2.5" fill="none" stroke="#959595" stroke-width="2"/></svg>
<div style="left:1012px;top:469px;width:13px;height:13px;background:#fff;border:1px solid #a8a8a8;box-sizing:border-box;"></div>
<div style="left:1052px;top:469px;width:13px;height:13px;background:#fff;border:1px solid #a8a8a8;box-sizing:border-box;"></div>
<div style="left:1091px;top:465px;width:114px;height:20px;background:#fff;border:1px solid #a9a9a9;box-sizing:border-box;"></div>
<div style="left:1183px;top:465px;width:22px;height:20px;background:#9b9ea0;"></div>
<svg style="left:1189.0px;top:471.0px" width="10" height="8" viewBox="0 0 10 8"><path d="M0 0H10L5.0 8Z" fill="#fff"/></svg>
<div class="t" style="left:1095.4px;top:467.00px;font-size:10.4px;line-height:16px;color:#1a1a1a;transform:scaleX(0.9683);transform-origin:0 0;">Status</div>
<div class="t" style="left:562.2px;top:488.90px;font-size:10.45px;line-height:16px;color:#1a1a1a;">Field_AO</div>
<div style="left:712px;top:490px;width:13px;height:13px;background:#ebebeb;border:1px solid #d6d6d6;box-sizing:border-box;"></div>
<div style="left:748px;top:490px;width:13px;height:13px;background:#ebebeb;border:1px solid #d6d6d6;box-sizing:border-box;"></div>
<div style="left:778px;top:490px;width:13px;height:13px;background:#fff;border:1px solid #cbcbcb;box-sizing:border-box;"></div>
<div style="left:811px;top:490px;width:13px;height:13px;background:#fff;border:1px solid #cbcbcb;box-sizing:border-box;"></div>
<div style="left:847px;top:490px;width:13px;height:13px;background:#fff;border:1px solid #a8a8a8;box-sizing:border-box;"></div>
<div style="left:880px;top:490px;width:13px;height:13px;background:#fff;border:1px solid #a8a8a8;box-sizing:border-box;"></div>
<svg style="left:880px;top:490px" width="13" height="13"><path d="M2.2 6.3L4.9 9.6L9.9 2.5" fill="none" stroke="#959595" stroke-width="2"/></svg>
<div style="left:913px;top:490px;width:13px;height:13px;background:#fff;border:1px solid #a8a8a8;box-sizing:border-box;"></div>
<svg style="left:913px;top:490px" width="13" height="13"><path d="M2.2 6.3L4.9 9.6L9.9 2.5" fill="none" stroke="#959595" stroke-width="2"/></svg>
<div style="left:946px;top:490px;width:13px;height:13px;background:#fff;border:1px solid #a8a8a8;box-sizing:border-box;"></div>
<svg style="left:946px;top:490px" width="13" height="13"><path d="M2.2 6.3L4.9 9.6L9.9 2.5" fill="none" stroke="#959595" stroke-width="2"/></svg>
<div style="left:979px;top:490px;width:13px;height:13px;background:#fff;border:1px solid #a8a8a8;box-sizing:border-box;"></div>
<svg style="left:979px;top:490px" width="13" height="13"><path d="M2.2 6.3L4.9 9.6L9.9 2.5" fill="none" stroke="#959595" stroke-width="2"/></svg>
<div style="left:1012px;top:490px;width:13px;height:13px;background:#fff;border:1px solid #a8a8a8;box-sizing:border-box;"></div>
<div style="left:1052px;top:490px;width:13px;height:13px;background:#fff;border:1px solid #a8a8a8;box-sizing:border-box;"></div>
<div style="left:1091px;top:486px;width:114px;height:20px;background:#fff;border:1px solid #a9a9a9;box-sizing:border-box;"></div>
<div style="left:1183px;top:486px;width:22px;height:20px;background:#9b9ea0;"></div>
<svg style="left:1189.0px;top:492.0px" width="10" height="8" viewBox="0 0 10 8"><path d="M0 0H10L5.0 8Z" fill="#fff"/></svg>
<div class="t" style="left:1095.4px;top:488.00px;font-size:10.4px;line-height:16px;color:#1a1a1a;transform:scaleX(0.9683);transform-origin:0 0;">Status</div>
<div class="t" style="left:562.2px;top:509.90px;font-size:10.45px;line-height:16px;color:#1a1a1a;">Field_BI</div>
<div style="left:712px;top:511px;width:13px;height:13px;background:#ebebeb;border:1px solid #d6d6d6;box-sizing:border-box;"></div>
<div style="left:748px;top:511px;width:13px;height:13px;background:#ebebeb;border:1px solid #d6d6d6;box-sizing:border-box;"></div>
<div style="left:778px;top:511px;width:13px;height:13px;background:#fff;border:1px solid #cbcbcb;box-sizing:border-box;"></div>
<div style="left:811px;top:511px;width:13px;height:13px;background:#fff;border:1px solid #cbcbcb;box-sizing:border-box;"></div>
<div style="left:847px;top:511px;width:13px;height:13px;background:#fff;border:1px solid #a8a8a8;box-sizing:border-box;"></div>
<div style="left:880px;top:511px;width:13px;height:13px;background:#fff;border:1px solid #a8a8a8;box-sizing:border-box;"></div>
<svg style="left:880px;top:511px" width="13" height="13"><path d="M2.2 6.3L4.9 9.6L9.9 2.5" fill="none" stroke="#959595" stroke-width="2"/></svg>
<div style="left:913px;top:511px;width:13px;height:13px;background:#fff;border:1px solid #a8a8a8;box-sizing:border-box;"></div>
<svg style="left:913px;top:511px" width="13" height="13"><path d="M2.2 6.3L4.9 9.6L9.9 2.5" fill="none" stroke="#959595" stroke-width="2"/></svg>
<div style="left:946px;top:511px;width:13px;height:13px;background:#fff;border:1px solid #a8a8a8;box-sizing:border-box;"></div>
<svg style="left:946px;top:511px" width="13" height="13"><path d="M2.2 6.3L4.9 9.6L9.9 2.5" fill="none" stroke="#959595" stroke-width="2"/></svg>
<div style="left:979px;top:511px;width:13px;height:13px;background:#fff;border:1px solid #a8a8a8;box-sizing:border-box;"></div>
<svg style="left:979px;top:511px" width="13" height="13"><path d="M2.2 6.3L4.9 9.6L9.9 2.5" fill="none" stroke="#959595" stroke-width="2"/></svg>
<div style="left:1012px;top:511px;width:13px;height:13px;background:#fff;border:1px solid #a8a8a8;box-sizing:border-box;"></div>
<div style="left:1052px;top:511px;width:13px;height:13px;background:#fff;border:1px solid #a8a8a8;box-sizing:border-box;"></div>
<div style="left:1091px;top:507px;width:114px;height:20px;background:#fff;border:1px solid #a9a9a9;box-sizing:border-box;"></div>
<div style="left:1183px;top:507px;width:22px;height:20px;background:#9b9ea0;"></div>
<svg style="left:1189.0px;top:513.0px" width="10" height="8" viewBox="0 0 10 8"><path d="M0 0H10L5.0 8Z" fill="#fff"/></svg>
<div class="t" style="left:1095.4px;top:509.00px;font-size:10.4px;line-height:16px;color:#1a1a1a;transform:scaleX(0.9683);transform-origin:0 0;">Status</div>
<div class="t" style="left:562.2px;top:530.90px;font-size:10.45px;line-height:16px;color:#1a1a1a;">Field_BO_1</div>
<div style="left:712px;top:532px;width:13px;height:13px;background:#ebebeb;border:1px solid #d6d6d6;box-sizing:border-box;"></div>
<div style="left:748px;top:532px;width:13px;height:13px;background:#ebebeb;border:1px solid #d6d6d6;box-sizing:border-box;"></div>
<div style="left:778px;top:532px;width:13px;height:13px;background:#fff;border:1px solid #cbcbcb;box-sizing:border-box;"></div>
<div style="left:811px;top:532px;width:13px;height:13px;background:#fff;border:1px solid #cbcbcb;box-sizing:border-box;"></div>
<div style="left:847px;top:532px;width:13px;height:13px;background:#fff;border:1px solid #a8a8a8;box-sizing:border-box;"></div>
<div style="left:880px;top:532px;width:13px;height:13px;background:#fff;border:1px solid #a8a8a8;box-sizing:border-box;"></div>
<svg style="left:880px;top:532px" width="13" height="13"><path d="M2.2 6.3L4.9 9.6L9.9 2.5" fill="none" stroke="#959595" stroke-width="2"/></svg>
<div style="left:913px;top:532px;width:13px;height:13px;background:#fff;border:1px solid #a8a8a8;box-sizing:border-box;"></div>
<svg style="left:913px;top:532px" width="13" height="13"><path d="M2.2 6.3L4.9 9.6L9.9 2.5" fill="none" stroke="#959595" stroke-width="2"/></svg>
<div style="left:946px;top:532px;width:13px;height:13px;background:#fff;border:1px solid #a8a8a8;box-sizing:border-box;"></div>
<svg style="left:946px;top:532px" width="13" height="13"><path d="M2.2 6.3L4.9 9.6L9.9 2.5" fill="none" stroke="#959595" stroke-width="2"/></svg>
<div style="left:979px;top:532px;width:13px;height:13px;background:#fff;border:1px solid #a8a8a8;box-sizing:border-box;"></div>
<svg style="left:979px;top:532px" width="13" height="13"><path d="M2.2 6.3L4.9 9.6L9.9 2.5" fill="none" stroke="#959595" stroke-width="2"/></svg>
<div style="left:1012px;top:532px;width:13px;height:13px;background:#fff;border:1px solid #a8a8a8;box-sizing:border-box;"></div>
<div style="left:1052px;top:532px;width:13px;height:13px;background:#fff;border:1px solid #a8a8a8;box-sizing:border-box;"></div>
<div style="left:1091px;top:528px;width:114px;height:20px;background:#fff;border:1px solid #a9a9a9;box-sizing:border-box;"></div>
<div style="left:1183px;top:528px;width:22px;height:20px;background:#9b9ea0;"></div>
<svg style="left:1189.0px;top:534.0px" width="10" height="8" viewBox="0 0 10 8"><path d="M0 0H10L5.0 8Z" fill="#fff"/></svg>
<div class="t" style="left:1095.4px;top:530.00px;font-size:10.4px;line-height:16px;color:#1a1a1a;transform:scaleX(0.9683);transform-origin:0 0;">Status</div>
<div class="t" style="left:562.2px;top:551.90px;font-size:10.45px;line-height:16px;color:#1a1a1a;">Field_II</div>
<div style="left:712px;top:553px;width:13px;height:13px;background:#ebebeb;border:1px solid #d6d6d6;box-sizing:border-box;"></div>
<div style="left:748px;top:553px;width:13px;height:13px;background:#ebebeb;border:1px solid #d6d6d6;box-sizing:border-box;"></div>
<div style="left:778px;top:553px;width:13px;height:13px;background:#fff;border:1px solid #cbcbcb;box-sizing:border-box;"></div>
<div style="left:811px;top:553px;width:13px;height:13px;background:#fff;border:1px solid #cbcbcb;box-sizing:border-box;"></div>
<div style="left:847px;top:553px;width:13px;height:13px;background:#fff;border:1px solid #a8a8a8;box-sizing:border-box;"></div>
<div style="left:880px;top:553px;width:13px;height:13px;background:#fff;border:1px solid #a8a8a8;box-sizing:border-box;"></div>
<svg style="left:880px;top:553px" width="13" height="13"><path d="M2.2 6.3L4.9 9.6L9.9 2.5" fill="none" stroke="#959595" stroke-width="2"/></svg>
<div style="left:913px;top:553px;width:13px;height:13px;background:#fff;border:1px solid #a8a8a8;box-sizing:border-box;"></div>
<svg style="left:913px;top:553px" width="13" height="13"><path d="M2.2 6.3L4.9 9.6L9.9 2.5" fill="none" stroke="#959595" stroke-width="2"/></svg>
<div style="left:946px;top:553px;width:13px;height:13px;background:#fff;border:1px solid #a8a8a8;box-sizing:border-box;"></div>
<svg style="left:946px;top:553px" width="13" height="13"><path d="M2.2 6.3L4.9 9.6L9.9 2.5" fill="none" stroke="#959595" stroke-width="2"/></svg>
<div style="left:979px;top:553px;width:13px;height:13px;background:#fff;border:1px solid #a8a8a8;box-sizing:border-box;"></div>
<svg style="left:979px;top:553px" width="13" height="13"><path d="M2.2 6.3L4.9 9.6L9.9 2.5" fill="none" stroke="#959595" stroke-width="2"/></svg>
<div style="left:1012px;top:553px;width:13px;height:13px;background:#fff;border:1px solid #a8a8a8;box-sizing:border-box;"></div>
<div style="left:1052px;top:553px;width:13px;height:13px;background:#fff;border:1px solid #a8a8a8;box-sizing:border-box;"></div>
<div style="left:1091px;top:549px;width:114px;height:20px;background:#fff;border:1px solid #a9a9a9;box-sizing:border-box;"></div>
<div style="left:1183px;top:549px;width:22px;height:20px;background:#9b9ea0;"></div>
<svg style="left:1189.0px;top:555.0px" width="10" height="8" viewBox="0 0 10 8"><path d="M0 0H10L5.0 8Z" fill="#fff"/></svg>
<div class="t" style="left:1095.4px;top:551.00px;font-size:10.4px;line-height:16px;color:#1a1a1a;transform:scaleX(0.9683);transform-origin:0 0;">Status</div>
<div class="t" style="left:562.2px;top:572.90px;font-size:10.45px;line-height:16px;color:#1a1a1a;">Field_IO</div>
<div style="left:712px;top:574px;width:13px;height:13px;background:#ebebeb;border:1px solid #d6d6d6;box-sizing:border-box;"></div>
<div style="left:748px;top:574px;width:13px;height:13px;background:#ebebeb;border:1px solid #d6d6d6;box-sizing:border-box;"></div>
<div style="left:778px;top:574px;width:13px;height:13px;background:#fff;border:1px solid #cbcbcb;box-sizing:border-box;"></div>
<div style="left:811px;top:574px;width:13px;height:13px;background:#fff;border:1px solid #cbcbcb;box-sizing:border-box;"></div>
<div style="left:847px;top:574px;width:13px;height:13px;background:#fff;border:1px solid #a8a8a8;box-sizing:border-box;"></div>
<div style="left:880px;top:574px;width:13px;height:13px;background:#fff;border:1px solid #a8a8a8;box-sizing:border-box;"></div>
<svg style="left:880px;top:574px" width="13" height="13"><path d="M2.2 6.3L4.9 9.6L9.9 2.5" fill="none" stroke="#959595" stroke-width="2"/></svg>
<div style="left:913px;top:574px;width:13px;height:13px;background:#fff;border:1px solid #a8a8a8;box-sizing:border-box;"></div>
<svg style="left:913px;top:574px" width="13" height="13"><path d="M2.2 6.3L4.9 9.6L9.9 2.5" fill="none" stroke="#959595" stroke-width="2"/></svg>
<div style="left:946px;top:574px;width:13px;height:13px;background:#fff;border:1px solid #a8a8a8;box-sizing:border-box;"></div>
<svg style="left:946px;top:574px" width="13" height="13"><path d="M2.2 6.3L4.9 9.6L9.9 2.5" fill="none" stroke="#959595" stroke-width="2"/></svg>
<div style="left:979px;top:574px;width:13px;height:13px;background:#fff;border:1px solid #a8a8a8;box-sizing:border-box;"></div>
<svg style="left:979px;top:574px" width="13" height="13"><path d="M2.2 6.3L4.9 9.6L9.9 2.5" fill="none" stroke="#959595" stroke-width="2"/></svg>
<div style="left:1012px;top:574px;width:13px;height:13px;background:#fff;border:1px solid #a8a8a8;box-sizing:border-box;"></div>
<div style="left:1052px;top:574px;width:13px;height:13px;background:#fff;border:1px solid #a8a8a8;box-sizing:border-box;"></div>
<div style="left:1091px;top:570px;width:114px;height:20px;background:#fff;border:1px solid #a9a9a9;box-sizing:border-box;"></div>
<div style="left:1183px;top:570px;width:22px;height:20px;background:#9b9ea0;"></div>
<svg style="left:1189.0px;top:576.0px" width="10" height="8" viewBox="0 0 10 8"><path d="M0 0H10L5.0 8Z" fill="#fff"/></svg>
<div class="t" style="left:1095.4px;top:572.00px;font-size:10.4px;line-height:16px;color:#1a1a1a;transform:scaleX(0.9683);transform-origin:0 0;">Status</div>
<div class="t" style="left:562.2px;top:593.90px;font-size:10.45px;line-height:16px;color:#1a1a1a;">Field_MO</div>
<div style="left:712px;top:595px;width:13px;height:13px;background:#ebebeb;border:1px solid #d6d6d6;box-sizing:border-box;"></div>
<div style="left:748px;top:595px;width:13px;height:13px;background:#ebebeb;border:1px solid #d6d6d6;box-sizing:border-box;"></div>
<div style="left:778px;top:595px;width:13px;height:13px;background:#fff;border:1px solid #cbcbcb;box-sizing:border-box;"></div>
<div style="left:811px;top:595px;width:13px;height:13px;background:#fff;border:1px solid #cbcbcb;box-sizing:border-box;"></div>
<div style="left:847px;top:595px;width:13px;height:13px;background:#fff;border:1px solid #a8a8a8;box-sizing:border-box;"></div>
<div style="left:880px;top:595px;width:13px;height:13px;background:#fff;border:1px solid #a8a8a8;box-sizing:border-box;"></div>
<svg style="left:880px;top:595px" width="13" height="13"><path d="M2.2 6.3L4.9 9.6L9.9 2.5" fill="none" stroke="#959595" stroke-width="2"/></svg>
<div style="left:913px;top:595px;width:13px;height:13px;background:#fff;border:1px solid #a8a8a8;box-sizing:border-box;"></div>
<svg style="left:913px;top:595px" width="13" height="13"><path d="M2.2 6.3L4.9 9.6L9.9 2.5" fill="none" stroke="#959595" stroke-width="2"/></svg>
<div style="left:946px;top:595px;width:13px;height:13px;background:#fff;border:1px solid #a8a8a8;box-sizing:border-box;"></div>
<svg style="left:946px;top:595px" width="13" height="13"><path d="M2.2 6.3L4.9 9.6L9.9 2.5" fill="none" stroke="#959595" stroke-width="2"/></svg>
<div style="left:979px;top:595px;width:13px;height:13px;background:#fff;border:1px solid #a8a8a8;box-sizing:border-box;"></div>
<svg style="left:979px;top:595px" width="13" height="13"><path d="M2.2 6.3L4.9 9.6L9.9 2.5" fill="none" stroke="#959595" stroke-width="2"/></svg>
<div style="left:1012px;top:595px;width:13px;height:13px;background:#fff;border:1px solid #a8a8a8;box-sizing:border-box;"></div>
<div style="left:1052px;top:595px;width:13px;height:13px;background:#fff;border:1px solid #a8a8a8;box-sizing:border-box;"></div>
<div style="left:1091px;top:591px;width:114px;height:20px;background:#fff;border:1px solid #a9a9a9;box-sizing:border-box;"></div>
<div style="left:1183px;top:591px;width:22px;height:20px;background:#9b9ea0;"></div>
<svg style="left:1189.0px;top:597.0px" width="10" height="8" viewBox="0 0 10 8"><path d="M0 0H10L5.0 8Z" fill="#fff"/></svg>
<div class="t" style="left:1095.4px;top:593.00px;font-size:10.4px;line-height:16px;color:#1a1a1a;transform:scaleX(0.9683);transform-origin:0 0;">Status</div>
<div class="t" style="left:562.2px;top:614.90px;font-size:10.45px;line-height:16px;color:#1a1a1a;">Field_MI</div>
<div style="left:712px;top:616px;width:13px;height:13px;background:#ebebeb;border:1px solid #d6d6d6;box-sizing:border-box;"></div>
<div style="left:748px;top:616px;width:13px;height:13px;background:#ebebeb;border:1px solid #d6d6d6;box-sizing:border-box;"></div>
<div style="left:778px;top:616px;width:13px;height:13px;background:#fff;border:1px solid #cbcbcb;box-sizing:border-box;"></div>
<div style="left:811px;top:616px;width:13px;height:13px;background:#fff;border:1px solid #cbcbcb;box-sizing:border-box;"></div>
<div style="left:847px;top:616px;width:13px;height:13px;background:#fff;border:1px solid #a8a8a8;box-sizing:border-box;"></div>
<div style="left:880px;top:616px;width:13px;height:13px;background:#fff;border:1px solid #a8a8a8;box-sizing:border-box;"></div>
<svg style="left:880px;top:616px" width="13" height="13"><path d="M2.2 6.3L4.9 9.6L9.9 2.5" fill="none" stroke="#959595" stroke-width="2"/></svg>
<div style="left:913px;top:616px;width:13px;height:13px;background:#fff;border:1px solid #a8a8a8;box-sizing:border-box;"></div>
<svg style="left:913px;top:616px" width="13" height="13"><path d="M2.2 6.3L4.9 9.6L9.9 2.5" fill="none" stroke="#959595" stroke-width="2"/></svg>
<div style="left:946px;top:616px;width:13px;height:13px;background:#fff;border:1px solid #a8a8a8;box-sizing:border-box;"></div>
<svg style="left:946px;top:616px" width="13" height="13"><path d="M2.2 6.3L4.9 9.6L9.9 2.5" fill="none" stroke="#959595" stroke-width="2"/></svg>
<div style="left:979px;top:616px;width:13px;height:13px;background:#fff;border:1px solid #a8a8a8;box-sizing:border-box;"></div>
<svg style="left:979px;top:616px" width="13" height="13"><path d="M2.2 6.3L4.9 9.6L9.9 2.5" fill="none" stroke="#959595" stroke-width="2"/></svg>
<div style="left:1012px;top:616px;width:13px;height:13px;background:#fff;border:1px solid #a8a8a8;box-sizing:border-box;"></div>
<div style="left:1052px;top:616px;width:13px;height:13px;background:#fff;border:1px solid #a8a8a8;box-sizing:border-box;"></div>
<div style="left:1091px;top:612px;width:114px;height:20px;background:#fff;border:1px solid #a9a9a9;box-sizing:border-box;"></div>
<div style="left:1183px;top:612px;width:22px;height:20px;background:#9b9ea0;"></div>
<svg style="left:1189.0px;top:618.0px" width="10" height="8" viewBox="0 0 10 8"><path d="M0 0H10L5.0 8Z" fill="#fff"/></svg>
<div class="t" style="left:1095.4px;top:614.00px;font-size:10.4px;line-height:16px;color:#1a1a1a;transform:scaleX(0.9683);transform-origin:0 0;">Status</div>
<div class="t" style="left:562.2px;top:635.90px;font-size:10.45px;line-height:16px;color:#1a1a1a;">FieldBI_bool</div>
<div style="left:712px;top:637px;width:13px;height:13px;background:#ebebeb;border:1px solid #d6d6d6;box-sizing:border-box;"></div>
<div style="left:748px;top:637px;width:13px;height:13px;background:#ebebeb;border:1px solid #d6d6d6;box-sizing:border-box;"></div>
<div style="left:778px;top:637px;width:13px;height:13px;background:#fff;border:1px solid #cbcbcb;box-sizing:border-box;"></div>
<div style="left:811px;top:637px;width:13px;height:13px;background:#fff;border:1px solid #cbcbcb;box-sizing:border-box;"></div>
<div style="left:847px;top:637px;width:13px;height:13px;background:#fff;border:1px solid #a8a8a8;box-sizing:border-box;"></div>
<div style="left:880px;top:637px;width:13px;height:13px;background:#fff;border:1px solid #a8a8a8;box-sizing:border-box;"></div>
<svg style="left:880px;top:637px" width="13" height="13"><path d="M2.2 6.3L4.9 9.6L9.9 2.5" fill="none" stroke="#959595" stroke-width="2"/></svg>
<div style="left:913px;top:637px;width:13px;height:13px;background:#fff;border:1px solid #a8a8a8;box-sizing:border-box;"></div>
<svg style="left:913px;top:637px" width="13" height="13"><path d="M2.2 6.3L4.9 9.6L9.9 2.5" fill="none" stroke="#959595" stroke-width="2"/></svg>
<div style="left:946px;top:637px;width:13px;height:13px;background:#fff;border:1px solid #a8a8a8;box-sizing:border-box;"></div>
<svg style="left:946px;top:637px" width="13" height="13"><path d="M2.2 6.3L4.9 9.6L9.9 2.5" fill="none" stroke="#959595" stroke-width="2"/></svg>
<div style="left:979px;top:637px;width:13px;height:13px;background:#fff;border:1px solid #a8a8a8;box-sizing:border-box;"></div>
<svg style="left:979px;top:637px" width="13" height="13"><path d="M2.2 6.3L4.9 9.6L9.9 2.5" fill="none" stroke="#959595" stroke-width="2"/></svg>
<div style="left:1012px;top:637px;width:13px;height:13px;background:#fff;border:1px solid #a8a8a8;box-sizing:border-box;"></div>
<div style="left:1052px;top:637px;width:13px;height:13px;background:#fff;border:1px solid #a8a8a8;box-sizing:border-box;"></div>
<div style="left:1091px;top:633px;width:114px;height:20px;background:#fff;border:1px solid #a9a9a9;box-sizing:border-box;"></div>
<div style="left:1183px;top:633px;width:22px;height:20px;background:#9b9ea0;"></div>
<svg style="left:1189.0px;top:639.0px" width="10" height="8" viewBox="0 0 10 8"><path d="M0 0H10L5.0 8Z" fill="#fff"/></svg>
<div class="t" style="left:1095.4px;top:635.00px;font-size:10.4px;line-height:16px;color:#1a1a1a;transform:scaleX(0.9683);transform-origin:0 0;">Status</div>
<div class="t" style="left:562.2px;top:656.90px;font-size:10.45px;line-height:16px;color:#1a1a1a;">Alarm.AlarmDPE</div>
<div style="left:712px;top:658px;width:13px;height:13px;background:#ebebeb;border:1px solid #d6d6d6;box-sizing:border-box;"></div>
<svg style="left:712px;top:658px" width="13" height="13"><path d="M2.6 6.6L5.3 9.6L10 2.8" fill="none" stroke="#a2a2a2" stroke-width="1.8"/></svg>
<div style="left:748px;top:658px;width:13px;height:13px;background:#ebebeb;border:1px solid #d6d6d6;box-sizing:border-box;"></div>
<div style="left:778px;top:658px;width:13px;height:13px;background:#fff;border:1px solid #cbcbcb;box-sizing:border-box;"></div>
<div style="left:811px;top:658px;width:13px;height:13px;background:#fff;border:1px solid #cbcbcb;box-sizing:border-box;"></div>
<div style="left:847px;top:658px;width:13px;height:13px;background:#fff;border:1px solid #a8a8a8;box-sizing:border-box;"></div>
<div style="left:880px;top:658px;width:13px;height:13px;background:#fff;border:1px solid #a8a8a8;box-sizing:border-box;"></div>
<div style="left:913px;top:658px;width:13px;height:13px;background:#fff;border:1px solid #a8a8a8;box-sizing:border-box;"></div>
<div style="left:946px;top:658px;width:13px;height:13px;background:#fff;border:1px solid #a8a8a8;box-sizing:border-box;"></div>
<div style="left:979px;top:658px;width:13px;height:13px;background:#fff;border:1px solid #a8a8a8;box-sizing:border-box;"></div>
<div style="left:1012px;top:658px;width:13px;height:13px;background:#fff;border:1px solid #a8a8a8;box-sizing:border-box;"></div>
<div style="left:1052px;top:658px;width:13px;height:13px;background:#fff;border:1px solid #a8a8a8;box-sizing:border-box;"></div>
<div style="left:1091px;top:654px;width:114px;height:20px;background:#fff;border:1px solid #a9a9a9;box-sizing:border-box;"></div>
<div style="left:1183px;top:654px;width:22px;height:20px;background:#9b9ea0;"></div>
<svg style="left:1189.0px;top:660.0px" width="10" height="8" viewBox="0 0 10 8"><path d="M0 0H10L5.0 8Z" fill="#fff"/></svg>
<div class="t" style="left:1095.4px;top:656.00px;font-size:10.4px;line-height:16px;color:#1a1a1a;letter-spacing:0.327px;">Configuration</div>
<div style="left:1242px;top:391px;width:5px;height:305px;background:#b9b9b9;"></div>
<div style="left:1255px;top:399px;width:457px;height:297px;border-left:1px solid #8f8f8f;border-right:1px solid #8f8f8f;box-sizing:border-box;"></div>
<div style="left:1255px;top:399px;width:457px;height:20px;background:#76797c;"></div>
<svg style="left:1261.5px;top:405.5px" width="8.5" height="7" viewBox="0 0 8.5 7"><path d="M0 0H8.5L4.25 7Z" fill="#fff"/></svg>
<div class="t" style="left:1279.5px;top:401.00px;font-size:10.9px;line-height:16px;color:#fff;transform:scaleX(0.9684);transform-origin:0 0;">Details</div>
<div style="left:1260.5px;top:430px;width:446px;height:66.5px;border:1px solid #d5d5d5;box-shadow:inset 1px 1px 0 #fff, 1px 1px 0 #fff;box-sizing:border-box;"></div>
<div style="left:1264.3px;top:428px;width:44.7px;height:4px;background:#f0f0f0;"></div>
<div class="t" style="left:1268.3px;top:420.70px;font-size:10.8px;line-height:16px;color:#1a1a1a;transform:scaleX(0.9545);transform-origin:0 0;">General</div>
<div class="t" style="left:1265.4px;top:442.00px;font-size:11.0px;line-height:16px;color:#1a1a1a;transform:scaleX(0.9499);transform-origin:0 0;">Type:</div>
<div style="left:1393px;top:440px;width:164px;height:20px;background:#fff;border:1px solid #a9a9a9;box-sizing:border-box;"></div>
<div style="left:1535px;top:440px;width:22px;height:20px;background:#9b9ea0;"></div>
<svg style="left:1541.0px;top:446.0px" width="10" height="8" viewBox="0 0 10 8"><path d="M0 0H10L5.0 8Z" fill="#fff"/></svg>
<div class="t" style="left:1397.8px;top:442.00px;font-size:10.4px;line-height:16px;color:#1a1a1a;">GmsEnum</div>
<div class="t" style="left:1265.4px;top:470.00px;font-size:11.0px;line-height:16px;color:#1a1a1a;transform:scaleX(0.9844);transform-origin:0 0;">Descriptor:</div>
<div style="left:1393px;top:467px;width:306px;height:22px;background:#fff;border:1px solid #a9a9a9;box-sizing:border-box;"></div>
<div class="t" style="left:1398px;top:467.80px;font-size:10.5px;line-height:16px;color:#1a1a1a;letter-spacing:0.023px;">Summary Status</div>
<svg style="left:1678px;top:470px" width="16" height="13"><ellipse cx="8" cy="6.5" rx="7.5" ry="6.2" fill="#4d78c8"/><ellipse cx="8" cy="4.5" rx="6" ry="3.5" fill="#7fa3e0"/><rect x="7" y="5.4" width="2.2" height="5" fill="#fff"/><circle cx="8.1" cy="3.4" r="1.2" fill="#fff"/></svg>
<div style="left:1260.5px;top:513px;width:446px;height:94.5px;border:1px solid #d5d5d5;box-shadow:inset 1px 1px 0 #fff, 1px 1px 0 #fff;box-sizing:border-box;"></div>
<div style="left:1264.3px;top:511px;width:84.9px;height:4px;background:#f0f0f0;"></div>
<div class="t" style="left:1268.3px;top:503.20px;font-size:10.8px;line-height:16px;color:#1a1a1a;letter-spacing:0.137px;">Value Attributes</div>
<div class="t" style="left:1265.4px;top:523.70px;font-size:11.0px;line-height:16px;color:#1a1a1a;transform:scaleX(0.9951);transform-origin:0 0;">Valid:</div>
<div style="left:1393px;top:526.5px;width:13px;height:13px;background:#fff;border:1px solid #d2d2d2;box-sizing:border-box;"></div>
<svg style="left:1393px;top:526.5px" width="13" height="13"><path d="M2 6.8L5 9.8L10.2 3" fill="none" stroke="#505050" stroke-width="1.9"/></svg>
<div class="t" style="left:1265.4px;top:552.00px;font-size:11.0px;line-height:16px;color:#1a1a1a;letter-spacing:0.370px;">Min:</div>
<div style="left:1393px;top:551.5px;width:125px;height:18px;background:#fff;border:1px solid #a9a9a9;box-sizing:border-box;"></div>
<div class="t" style="left:1398px;top:552.00px;font-size:10.5px;line-height:16px;color:#1a1a1a;">0</div>
<div class="t" style="left:1575.3px;top:552.00px;font-size:11.0px;line-height:16px;color:#1a1a1a;transform:scaleX(0.9761);transform-origin:0 0;">Max:</div>
<div style="left:1603px;top:551.5px;width:57px;height:18px;background:#fff;border:1px solid #a9a9a9;box-sizing:border-box;"></div>
<div class="t" style="left:1607.5px;top:552.00px;font-size:10.5px;line-height:16px;color:#1a1a1a;">650</div>
<div class="t" style="left:1265.4px;top:579.70px;font-size:11.0px;line-height:16px;color:#1a1a1a;letter-spacing:0.005px;">Text group:</div>
<div style="left:1393px;top:579px;width:306px;height:20px;background:#fff;border:1px solid #a9a9a9;box-sizing:border-box;"></div>
<div style="left:1676px;top:579px;width:23px;height:20px;background:#9b9ea0;"></div>
<svg style="left:1682.5px;top:585.0px" width="10" height="8" viewBox="0 0 10 8"><path d="M0 0H10L5.0 8Z" fill="#fff"/></svg>
<div class="t" style="left:1397.8px;top:581.00px;font-size:10.4px;line-height:16px;color:#1a1a1a;letter-spacing:0.034px;">TxG_PropagationSummaryStatus</div>
<div style="left:1260.5px;top:623px;width:446px;height:80.5px;border:1px solid #d5d5d5;box-shadow:inset 1px 1px 0 #fff, 1px 1px 0 #fff;box-sizing:border-box;"></div>
<div style="left:1264.3px;top:621px;width:43px;height:4px;background:#f0f0f0;"></div>
<div class="t" style="left:1268.3px;top:613.70px;font-size:10.8px;line-height:16px;color:#1a1a1a;transform:scaleX(0.9880);transform-origin:0 0;">Display</div>
<div class="t" style="left:1265.4px;top:634.00px;font-size:11.0px;line-height:16px;color:#1a1a1a;transform:scaleX(0.9951);transform-origin:0 0;">Valid:</div>
<div style="left:1383px;top:636.5px;width:13px;height:13px;background:#ebebeb;border:1px solid #d6d6d6;box-sizing:border-box;"></div>
<svg style="left:1383px;top:636.5px" width="13" height="13"><path d="M2.6 6.6L5.3 9.6L10 2.8" fill="none" stroke="#a2a2a2" stroke-width="1.8"/></svg>
<div class="t" style="left:1265.4px;top:661.70px;font-size:11.0px;line-height:16px;color:#1a1a1a;letter-spacing:0.061px;">Omit prop. descriptor:</div>
<div style="left:1383px;top:664.5px;width:13px;height:13px;background:#fff;border:1px solid #cbcbcb;box-sizing:border-box;"></div>
<div class="t" style="left:1484px;top:661.70px;font-size:11.0px;line-height:16px;color:#1a1a1a;letter-spacing:0.003px;">Icon library:</div>
<div style="left:1563px;top:661px;width:129px;height:20px;background:#fff;border:1px solid #a9a9a9;box-sizing:border-box;"></div>
<div style="left:1668px;top:661px;width:24px;height:20px;background:#9b9ea0;"></div>
<svg style="left:1675.0px;top:667.0px" width="10" height="8" viewBox="0 0 10 8"><path d="M0 0H10L5.0 8Z" fill="#fff"/></svg>
<div class="t" style="left:1567.8px;top:663.00px;font-size:10.4px;line-height:16px;color:#1a1a1a;transform:scaleX(0.9648);transform-origin:0 0;">Global_Base_HQ_1</div>
<div style="left:549px;top:696px;width:10px;height:8px;background:#fff;"></div>
<div style="left:559px;top:696px;width:1153px;height:8px;background:#d5dde0;"></div>
<div style="left:1721px;top:696px;width:8px;height:8px;background:#f0f0f0;"></div>
<div style="left:559px;top:696px;width:1145px;height:8px;background:#a0a5a8;"></div>
<svg style="left:1716px;top:696.5px" width="4" height="7" viewBox="0 0 4 7"><path d="M0 0L4 3.5L0 7Z" fill="#9a9a9a"/></svg>
<svg style="left:549px;top:696px" width="6" height="8"><path d="M5 0.5V7.5L1 4Z" fill="#9a9a9a"/></svg>
<svg style="left:1715.5px;top:50px" width="7" height="4" viewBox="0 0 7 4"><path d="M0 4H7L3.5 0Z" fill="#9a9a9a"/></svg>
<div style="left:1715px;top:60px;width:8px;height:629px;background:#d5dde0;"></div>
<div style="left:1715px;top:60px;width:8px;height:228px;background:#9ca1a4;"></div>
<svg style="left:1715.5px;top:690px" width="7" height="4" viewBox="0 0 7 4"><path d="M0 0H7L3.5 4Z" fill="#9a9a9a"/></svg>
</body></html>
